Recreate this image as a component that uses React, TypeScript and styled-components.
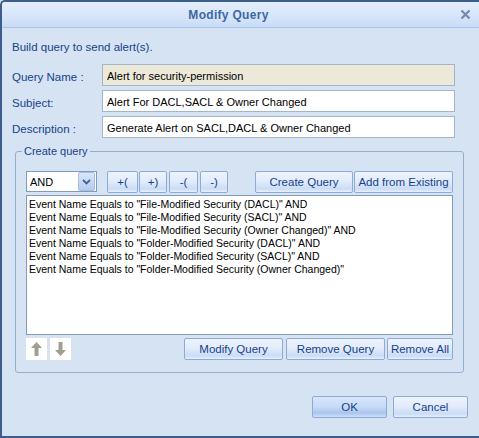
import React, { useState } from 'react'
import styled, { createGlobalStyle } from 'styled-components'

const GlobalStyle = createGlobalStyle`
    html, body {
        margin: 0;
        padding: 0;
        background: #d5e3f2;
    }
    body {
        font-family: "Liberation Sans", Arial, sans-serif;
        font-size: 11px;
    }
`

const Window = styled.div`
    box-sizing: border-box;
    width: 479px;
    height: 438px;
    background: #d5e3f2;
    border-left: 2px solid #3d5d8a;
    border-top: 2px solid #3d5d8a;
    border-bottom: 2px solid #3d5d8a;
    border-top-left-radius: 5px;
    display: flex;
    flex-direction: column;
    overflow: hidden;
`

const TitleBar = styled.div`
    height: 25px;
    flex: none;
    display: flex;
    align-items: center;
    justify-content: center;
    position: relative;
    padding-right: 24px;
    background: linear-gradient(#e4eefc 0%, #d9e7fa 45%, #c9dcf6 100%);
    border-bottom: 1px solid #a9c6e8;
    color: #3e67a3;
    font-size: 12px;
    font-weight: bold;
    letter-spacing: 0.3px;
`

const CloseButton = styled.span`
    position: absolute;
    right: 8px;
    top: 6px;
    width: 12px;
    height: 12px;
    display: flex;
    align-items: center;
    justify-content: center;
`

const Body = styled.div`
    flex: 1;
    display: flex;
    flex-direction: column;
    padding: 12px 0 0 10px;
    color: #15428b;
`

const Intro = styled.div`
    height: 14px;
    line-height: 14px;
    margin-bottom: 10px;
    font-size: 11.5px;
`

const FieldRow = styled.div`
    display: flex;
    align-items: center;
    height: 22px;
    margin-bottom: 4px;
`

const Label = styled.label`
    width: 90px;
    flex: none;
    padding-top: 3px;
    font-size: 11.5px;
`

const TextBox = styled.input<{ $readOnly?: boolean }>`
    box-sizing: border-box;
    width: 353px;
    height: 22px;
    border: 1px solid #a3b5ca;
    background: ${p => (p.$readOnly ? '#ece9d8' : '#ffffff')};
    font: inherit;
    color: #000;
    padding: 1px 4px 0;
    outline: none;
`

const GroupBox = styled.fieldset`
    box-sizing: border-box;
    width: 449px;
    margin: 3px 0 0 3px;
    padding: 14px 10px 12px 10px;
    border: 1px solid #96aecc;
    border-radius: 3px;
    display: flex;
    flex-direction: column;
`

const Legend = styled.legend`
    padding: 0 2px;
    margin-left: -4px;
    color: #15428b;
    font-size: 11px;
`

const Toolbar = styled.div`
    display: flex;
    align-items: center;
    height: 21px;
    margin-bottom: 3px;
`

const Combo = styled.div`
    box-sizing: border-box;
    width: 71px;
    height: 21px;
    border: 1px solid #7f9db9;
    background: #fff;
    display: flex;
    align-items: center;
    justify-content: space-between;
    padding: 0 1px 0 3px;
    color: #000;
    margin-right: 8px;
`

const ComboArrow = styled.span`
    width: 15px;
    height: 17px;
    border: 1px solid #a8bfe0;
    border-radius: 2px;
    background: linear-gradient(#d9e6fb, #b5cdf3);
    display: flex;
    align-items: center;
    justify-content: center;
`

const Button = styled.button<{ $w: number; $gap?: number; $pressed?: boolean }>`
    box-sizing: border-box;
    width: ${p => p.$w}px;
    height: 22px;
    margin-left: ${p => p.$gap ?? 2}px;
    border: 1px solid #8fabd2;
    border-radius: 2px;
    background: ${p =>
        p.$pressed
            ? 'linear-gradient(#d6e6fb 0%, #c7dbf6 50%, #a9c6ee 80%, #cfe0f8 100%)'
            : 'linear-gradient(#edf3fd 0%, #e3ecfb 45%, #cadcf6 85%, #e8f0fc 100%)'};
    color: #15428b;
    font: inherit;
    font-size: 11.5px;
    padding: 0;
    cursor: default;
`

const Spacer = styled.div`
    flex: 1;
`

const ListBox = styled.div`
    box-sizing: border-box;
    height: 140px;
    border: 1px solid #7f9db9;
    background: #fff;
    color: #000;
    padding: 2px 2px;
    line-height: 13px;
    font-size: 10.5px;
`

const ListItem = styled.div`
    white-space: nowrap;
`

const BottomRow = styled.div`
    display: flex;
    align-items: center;
    margin-top: 3px;
`

const ArrowButton = styled.span`
    width: 21px;
    height: 22px;
    background: #fff;
    margin-right: 3px;
    display: flex;
    align-items: center;
    justify-content: center;
`

const Footer = styled.div`
    display: flex;
    justify-content: flex-end;
    gap: 4px;
    padding: 23px 11px 0 0;
`

const ArrowIcon: React.FC<{ down?: boolean }> = ({ down }) => (
    <svg width="11" height="14" viewBox="0 0 11 14" style={down ? { transform: 'rotate(180deg)' } : undefined}>
        <path d="M5.5 0 L11 6 L7.5 6 L7.5 14 L3.5 14 L3.5 6 L0 6 Z" fill="#a19f91" />
    </svg>
)

const conditions = [
    'Event Name Equals to "File-Modified Security (DACL)" AND',
    'Event Name Equals to "File-Modified Security (SACL)" AND',
    'Event Name Equals to "File-Modified Security (Owner Changed)" AND',
    'Event Name Equals to "Folder-Modified Security (DACL)" AND',
    'Event Name Equals to "Folder-Modified Security (SACL)" AND',
    'Event Name Equals to "Folder-Modified Security (Owner Changed)"',
]

const App: React.FC = () => {
    const [subject, setSubject] = useState('Alert For DACL,SACL & Owner Changed')
    const [description, setDescription] = useState('Generate Alert on SACL,DACL & Owner Changed')

    return (
        <>
            <GlobalStyle />
            <Window>
                <TitleBar>
                    Modify Query
                    <CloseButton>
                        <svg width="11" height="11" viewBox="0 0 11 11">
                            <path d="M1.5 1.5 L9.5 9.5 M9.5 1.5 L1.5 9.5" stroke="#7189b0" strokeWidth="2.2" />
                        </svg>
                    </CloseButton>
                </TitleBar>
                <Body>
                    <Intro>Build query to send alert(s).</Intro>
                    <FieldRow>
                        <Label>Query Name :</Label>
                        <TextBox $readOnly readOnly value="Alert for security-permission" />
                    </FieldRow>
                    <FieldRow>
                        <Label>Subject:</Label>
                        <TextBox value={subject} onChange={e => setSubject(e.target.value)} />
                    </FieldRow>
                    <FieldRow>
                        <Label>Description :</Label>
                        <TextBox value={description} onChange={e => setDescription(e.target.value)} />
                    </FieldRow>

                    <GroupBox>
                        <Legend>Create query</Legend>
                        <Toolbar>
                            <Combo>
                                AND
                                <ComboArrow>
                                    <svg width="9" height="6" viewBox="0 0 9 6">
                                        <path d="M1 1 L4.5 4.5 L8 1" stroke="#4d6185" strokeWidth="1.8" fill="none" />
                                    </svg>
                                </ComboArrow>
                            </Combo>
                            <Button $w={31}>+(</Button>
                            <Button $w={28} $gap={1}>+)</Button>
                            <Button $w={29}>-(</Button>
                            <Button $w={28}>-)</Button>
                            <Spacer />
                            <Button $w={98}>Create Query</Button>
                            <Button $w={99} $gap={1}>Add from Existing</Button>
                        </Toolbar>
                        <ListBox>
                            {conditions.map(c => (
                                <ListItem key={c}>{c}</ListItem>
                            ))}
                        </ListBox>
                        <BottomRow>
                            <ArrowButton><ArrowIcon /></ArrowButton>
                            <ArrowButton><ArrowIcon down /></ArrowButton>
                            <Spacer />
                            <Button $w={99}>Modify Query</Button>
                            <Button $w={99} $gap={3}>Remove Query</Button>
                            <Button $w={66}>Remove All</Button>
                        </BottomRow>
                    </GroupBox>

                    <Footer>
                        <Button $w={75} $pressed>OK</Button>
                        <Button $w={75}>Cancel</Button>
                    </Footer>
                </Body>
            </Window>
        </>
    )
}

export default App
